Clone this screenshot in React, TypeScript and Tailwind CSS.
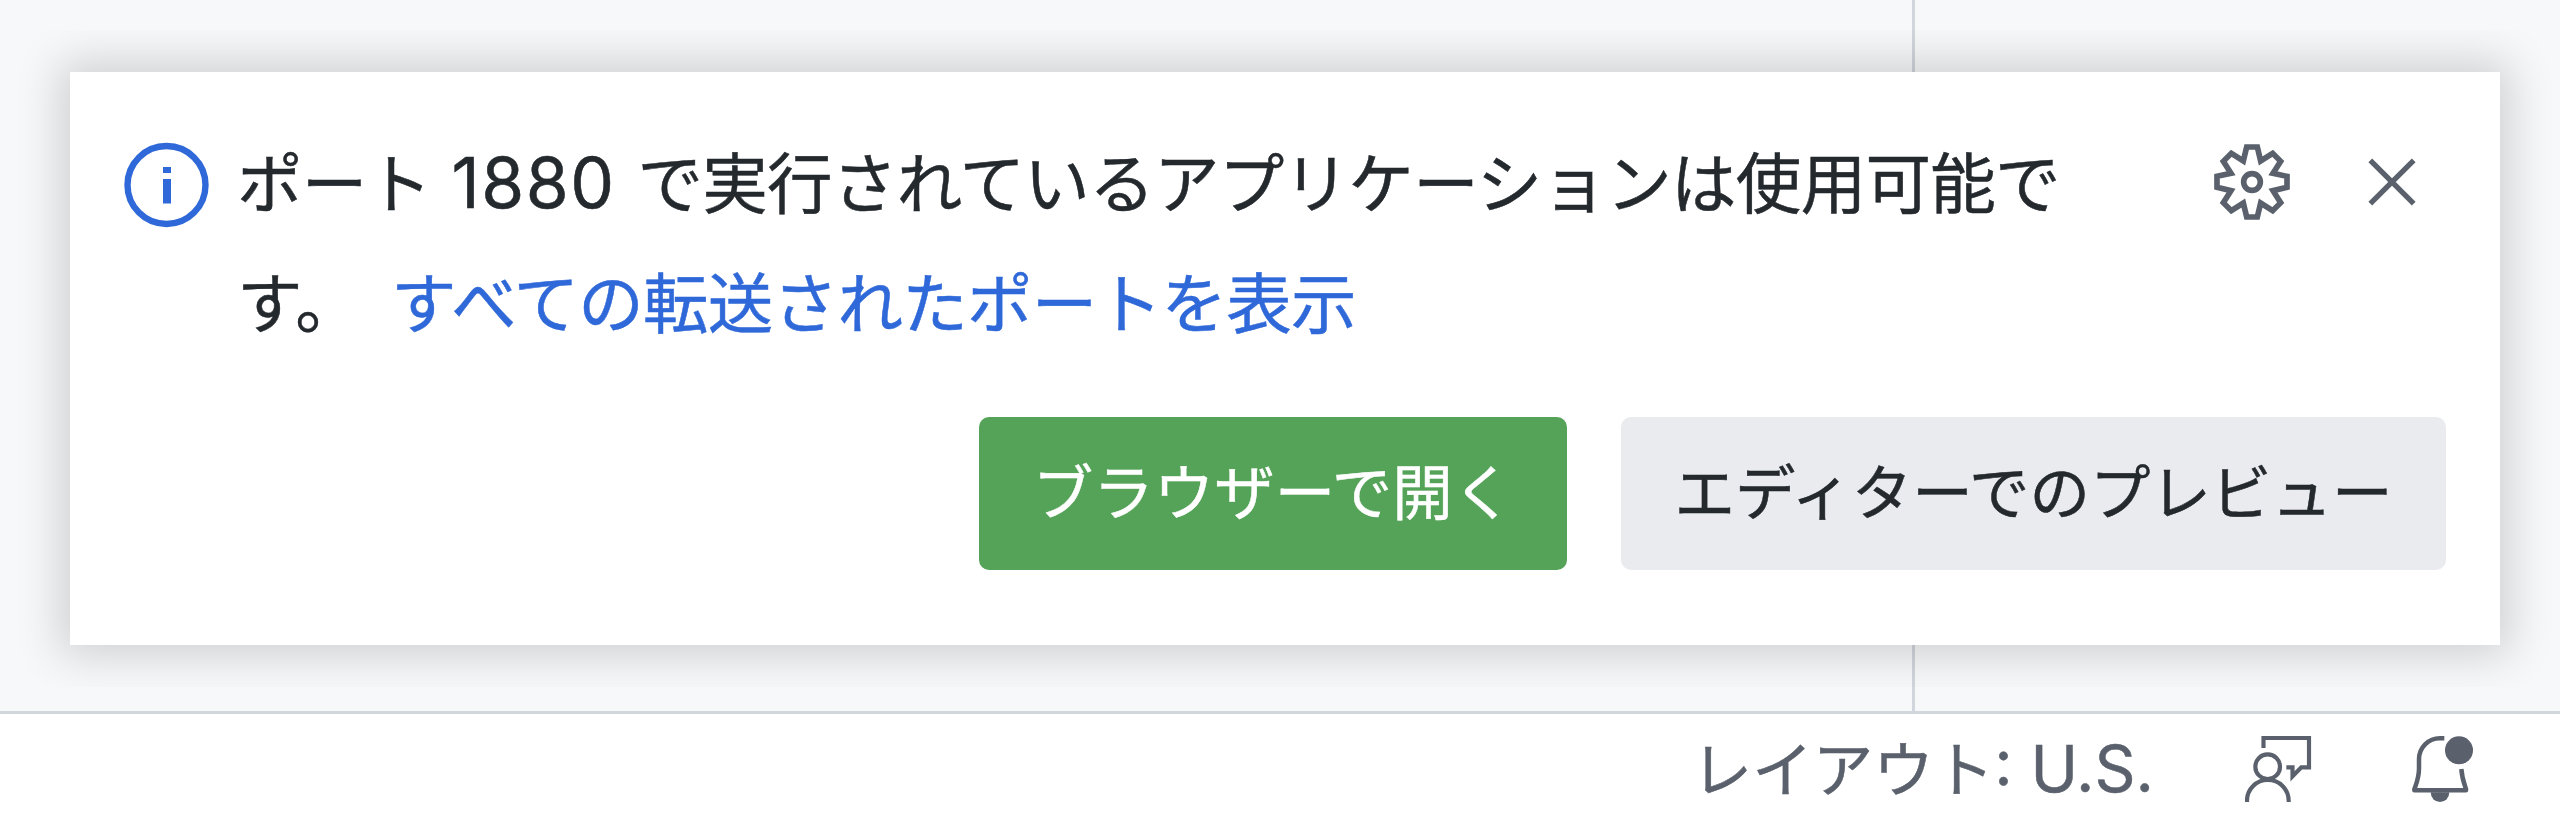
import React from "react";

const JP = "font-['Noto_Sans_CJK_JP',sans-serif] [-webkit-text-stroke:0.5px_currentColor]";
const LATIN = "font-['Inter','Noto_Sans_CJK_JP',sans-serif]";

function InfoIcon() {
  return (
    <svg viewBox="0 0 86 86" className="h-[86px] w-[86px] shrink-0" fill="none">
      <circle cx="42.500" cy="43" r="39" stroke="#2f68d8" strokeWidth="6.400" />
      <path d="M39 25h8v6h-8zM39 37h8v24.500h-8z" fill="#2f68d8" />
    </svg>
  );
}

function GearIcon() {
  return (
    <svg viewBox="-114 -114 228 228" className="h-[76px] w-[76px]" fill="none" stroke="#5a616c" strokeWidth="17">
      <path d="M-16 -105H16L26 -63L62 -86L86 -62L63 -26L105 -17V16L63 26L86 62L62 86L26 63L16 105H-16L-26 63L-62 86L-86 62L-63 26L-105 16V-17L-63 -26L-86 -62L-62 -86L-26 -63Z" />
      <circle r="25" strokeWidth="17" />
    </svg>
  );
}

function CloseIcon() {
  return (
    <svg viewBox="0 0 48 48" className="h-[48px] w-[48px]" fill="none" stroke="#5a616c" strokeWidth="5.300">
      <path d="M2.300 2.300L45.700 45.700M45.700 2.300L2.300 45.700" />
    </svg>
  );
}

function FeedbackIcon() {
  return (
    <svg viewBox="135 105 201 204" className="h-[68px] w-[67px]" fill="none" stroke="#5a616c" strokeWidth="12.500">
      <path d="M190.500 144V114H327V202H304L277.500 229V202H259" />
      <circle cx="203" cy="200" r="37" />
      <path d="M141 306V302A62.500 62.500 0 0 1 266 302V306" />
    </svg>
  );
}

function BellDotIcon() {
  return (
    <svg viewBox="633 105 189 204" className="h-[68px] w-[63px]" fill="none">
      <path
        d="M733 115H720C685 115 657 143 657 178V205C657 235 649 250 643 268V271H798V267C792 250 786 235 784 207"
        stroke="#5a616c"
        strokeWidth="13.500"
        strokeLinejoin="round"
      />
      <path d="M692 277H748A28 29 0 0 1 692 277Z" fill="#5a616c" />
      <circle cx="777" cy="151" r="42" fill="#5a616c" />
    </svg>
  );
}

function Toast() {
  return (
    <section className="absolute left-[70px] top-[72px] flex h-[573px] w-[2430px] flex-col bg-white shadow-[0_0_42px_10px_rgba(0,0,0,0.16)] [clip-path:inset(-42px_-60px)]">
      <div className="flex items-start justify-between pl-[54px] pr-[84px] pt-[48px]">
        <div className="flex items-start">
          <div className="mt-[22px] flex">
            <InfoIcon />
          </div>
          <p className={`ml-[27px] whitespace-nowrap text-[65.500px] leading-[120px] tracking-[-0.700px] text-[#24292e] ${JP}`}>
            ポート<span className={`ml-[20px] mr-[22px] text-[69.500px] leading-none tracking-[1.500px] ${LATIN}`}>1880</span>で実行されているアプリケーションは使用可能で
            <br />
            す。<a className="ml-[31px] text-[#2f68d8]">すべての転送されたポートを表示</a>
          </p>
        </div>
        <div className="mt-[24px] flex items-center gap-[78px]">
          <GearIcon />
          <CloseIcon />
        </div>
      </div>
      <div className={`mt-[57px] flex justify-end gap-[54px] pr-[54px] text-[60.500px] ${JP}`}>
        <button className="flex h-[153px] w-[588px] items-center justify-center rounded-[10px] bg-[#55a358] pb-[8px] text-white">
          ブラウザーで開く
        </button>
        <button className="flex h-[153px] w-[825px] items-center justify-center whitespace-nowrap rounded-[10px] bg-[#eaebef] pb-[8px] text-[#24292e]">
          エディターでのプレビュー
        </button>
      </div>
    </section>
  );
}

export default function App() {
  return (
    <div className="relative flex h-[828px] w-[2560px] flex-col overflow-hidden bg-white">
      <main className="flex h-[711px] bg-[#f6f8fa]">
        <div className="w-[1912px]" />
        <div className="flex-1 border-l-[3px] border-[#d1d5dc]" />
      </main>
      <footer className="flex h-[117px] items-start justify-end border-t-[3px] border-[#d1d5dc] pr-[86px] text-[#5a616c]">
        <div className={`flex items-baseline whitespace-nowrap pt-[7px] text-[60.500px] leading-[90px] ${JP}`}>
          レイアウト<span className={`text-[64px] leading-none ${LATIN}`}>: U.S.</span>
        </div>
        <div className="ml-[91px] mt-[21px] flex">
          <FeedbackIcon />
        </div>
        <div className="ml-[99px] mt-[21px] flex">
          <BellDotIcon />
        </div>
      </footer>
      <Toast />
    </div>
  );
}
